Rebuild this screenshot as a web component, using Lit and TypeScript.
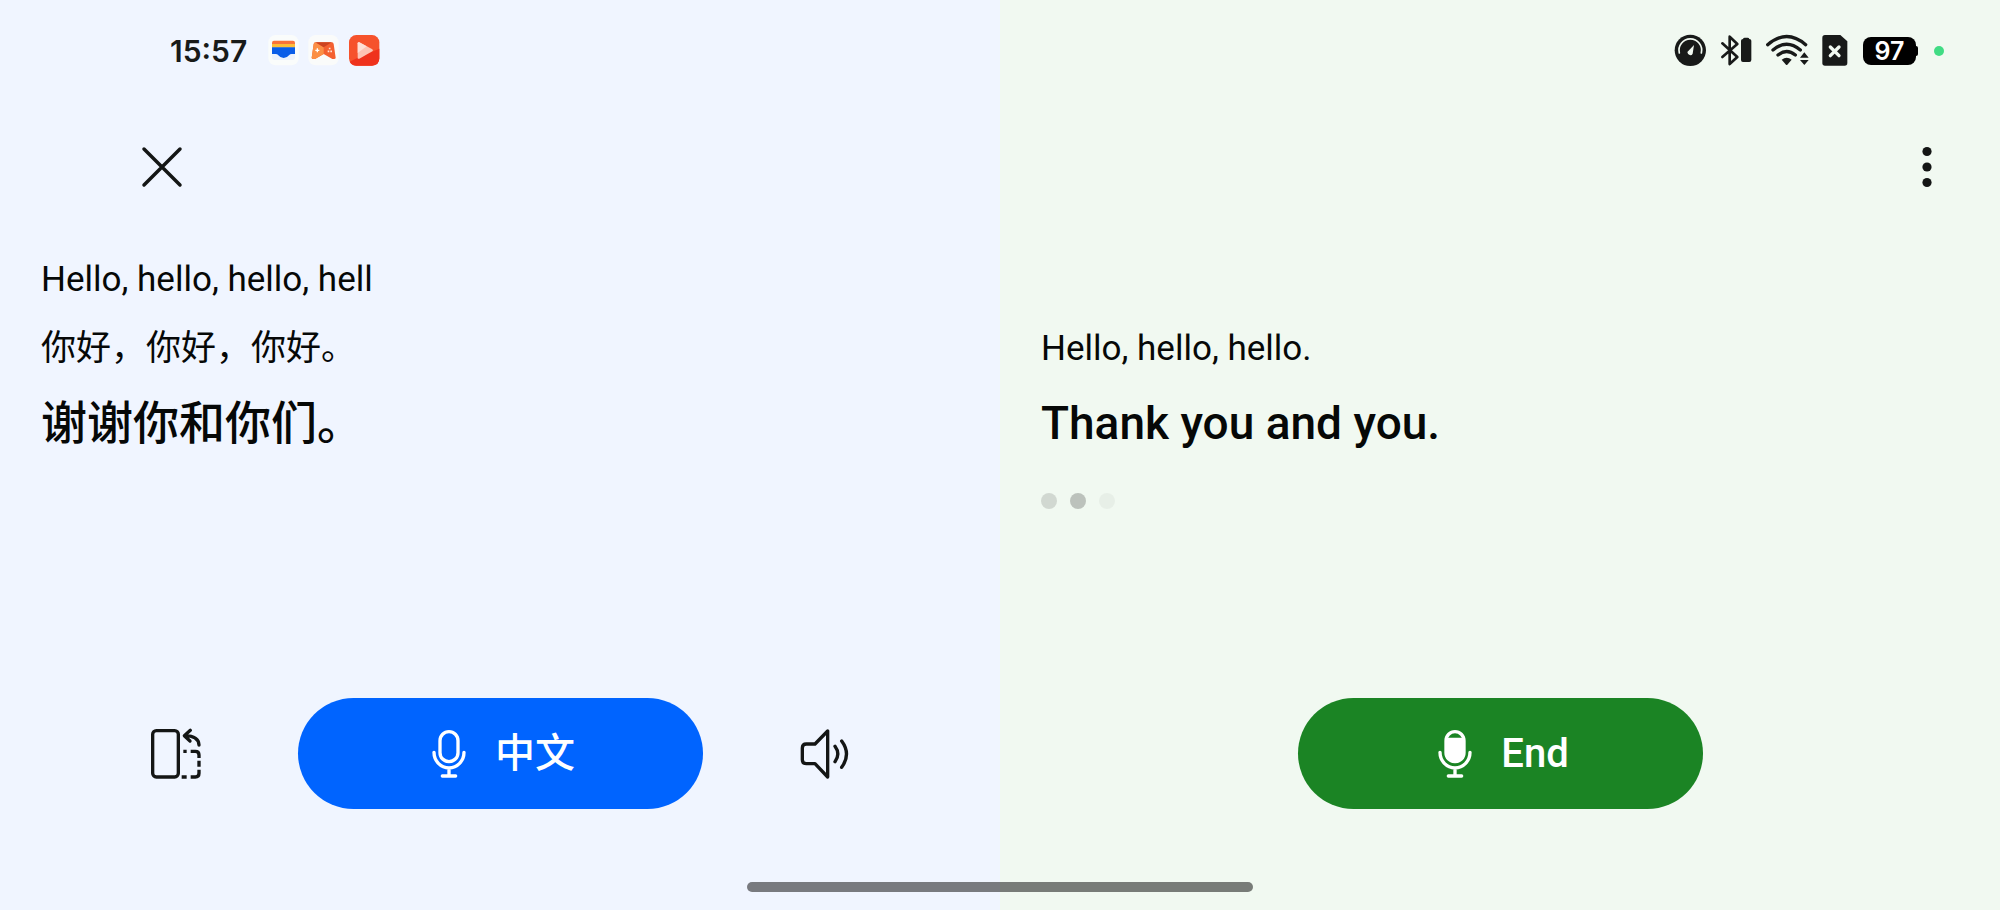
import { LitElement, html, css, svg } from "lit";
import { customElement, property } from "lit/decorators.js";

const walletIcon = svg`<svg class="app-icon" viewBox="0 0 96 102" role="img" aria-label="Wallet">
  <rect x="1" y="3" width="91" height="91" rx="22" fill="#fafcfb"/>
  <path d="M12 58h69v12q0 8-8 8H20q-8 0-8-8z" fill="#edf2fc"/>
  <path d="M12 32v-6q0-6 6-6h57q6 0 6 6v6z" fill="#fb7338"/>
  <rect x="12" y="30" width="69" height="11" fill="#fdbd38"/>
  <path d="M12 40h69v20H71q-5 0-8 4-6 8-16 8t-16-8q-3-4-8-4H12z" fill="#0a5de8"/>
</svg>`;

const gameIcon = svg`<svg class="app-icon" viewBox="0 0 96 102" role="img" aria-label="Games">
  <rect x="1" y="3" width="91" height="91" rx="22" fill="#fafbfa"/>
  <path d="M22 25h50q4 0 5 5l6 41q0 4-5 4h-5L47 60 21 75h-5q-5 0-5-4l6-41q1-5 5-5z" fill="#f4602f"/>
  <path d="M17 30l4-5 26 15v20L21 75h-5q-5 0-5-4z" fill="#fb8f45"/>
  <path d="M23 25h48L47 40z" fill="#cc431f"/>
  <path d="M28 43v12M22 49h12" stroke="#fff" stroke-width="4"/>
  <path d="M65 41v5M59 52h5M67 52h5" stroke="#ffe2d6" stroke-width="5"/>
</svg>`;

const playIcon = svg`<svg class="app-icon" viewBox="0 0 96 102" role="img" aria-label="Video">
  <rect x="3" y="3" width="91" height="92" rx="22" fill="#f6522c"/>
  <path d="M94 44v29q0 22-22 22H25q-14 0-20-12l24-12 20-8z" fill="#ef321d"/>
  <path d="M29 28q0-5 5-3l39 21q4 3 0 6L34 74q-5 2-5-3z" fill="#fdc4b5"/>
  <path d="M29 28q0-5 5-3l22 12-27 20z" fill="#fee0d6"/>
</svg>`;

const gaugeIcon = svg`<svg class="gauge" viewBox="0 0 102 102" role="img" aria-label="Performance">
  <circle cx="49" cy="49" r="47" fill="#181a19"/>
  <path d="M16 57a34 34 0 1 1 66 0" fill="none" stroke="#f1f9f1" stroke-width="5" stroke-linecap="round"/>
  <path d="M60 33l-4 26q-3 6-9 4t-7-9z" fill="#f1f9f1"/>
</svg>`;

const bluetoothIcon = svg`<svg class="bluetooth" viewBox="0 0 96 102" role="img" aria-label="Bluetooth">
  <path d="M7 28L52 69 29 90V8l23 22L7 69" fill="none" stroke="#181a19" stroke-width="8" stroke-linecap="round" stroke-linejoin="round"/>
  <path d="M63 20q0-5 6-5 1-4 5-4h9q4 0 5 4 6 0 6 5v58q0 6-6 6H69q-6 0-6-6z" fill="#181a19"/>
</svg>`;

const wifiIcon = svg`<svg class="wifi" viewBox="0 0 135 102" role="img" aria-label="Wi-Fi">
  <g fill="none" stroke="#181a19" stroke-width="10" stroke-linecap="round">
    <path d="M11 32Q68-17 125 32"/>
    <path d="M27 48Q68 14 109 48"/>
    <path d="M42 63Q68 42 94 63"/>
  </g>
  <path d="M53 77q15-12 30 0L70 92q-2 2-4 0z" fill="#181a19"/>
  <path d="M121 55l13 16h-26zM108 78h26l-13 15z" fill="#181a19"/>
</svg>`;

const simIcon = svg`<svg class="sim" viewBox="0 0 90 102" role="img" aria-label="No SIM">
  <path d="M12 3h46l21 19v65q0 8-8 8H12q-8 0-8-8V11q0-8 8-8z" fill="#181a19"/>
  <path d="M28 39l26 26M54 39L28 65" stroke="#f1f9f1" stroke-width="10" stroke-linecap="round"/>
</svg>`;

const closeIcon = svg`<svg class="glyph" viewBox="0 0 48 48" aria-hidden="true">
  <path d="M6 6l36 36M42 6L6 42" fill="none" stroke="#141615" stroke-width="3.5" stroke-linecap="round"/>
</svg>`;

const moreIcon = svg`<svg class="glyph" viewBox="0 0 48 48" aria-hidden="true">
  <g fill="#141615"><circle cx="24" cy="8.5" r="4.6"/><circle cx="24" cy="24" r="4.6"/><circle cx="24" cy="39.5" r="4.6"/></g>
</svg>`;

const flipIcon = svg`<svg class="tool" viewBox="0 0 168 168" aria-hidden="true">
  <g fill="none" stroke="#141615" stroke-width="10">
    <rect x="14" y="14" width="77" height="139" rx="11"/>
    <path d="M127 13L109 29l17 16M110 29Q152 30 153 57" stroke-linecap="round" stroke-linejoin="round"/>
    <path d="M106 76h10M128 76h14q11 0 11 11v9M153 104v18M153 131v11q0 11-11 11h-14M101 153h15"/>
  </g>
</svg>`;

const speakerIcon = svg`<svg class="tool" viewBox="0 0 168 168" aria-hidden="true">
  <g fill="none" stroke="#141615" stroke-width="10" stroke-linecap="round" stroke-linejoin="round">
    <path d="M57 54L95 15v138L57 113H31q-12 0-12-12V66q0-12 12-12z"/>
    <path d="M117 61q17 23 0 46M137 45q29 39 0 79"/>
  </g>
</svg>`;

const micIcon = (filled: boolean) => svg`<svg class="mic" viewBox="0 0 144 150" aria-hidden="true">
  <g fill="none" stroke="#fff" stroke-width="10" stroke-linecap="round">
    <rect x="45" y="8" width="54" height="90" rx="27"/>
    <path d="M27 70a45 47 0 0 0 90 0M72 117v24M52 141h40"/>
  </g>
  ${filled ? svg`<path d="M46 26h52v46a26 26 0 0 1-52 0z" fill="#fff"/>` : null}
</svg>`;

@customElement("talk-button")
class TalkButton extends LitElement {
  @property() label = "";
  @property({ type: Boolean, reflect: true }) active = false;

  static styles = css`
    :host { display: block; }
    button {
      display: flex;
      align-items: center;
      justify-content: center;
      gap: 22px;
      width: 100%;
      padding: 30px;
      border: 0;
      border-radius: 56px;
      background: #0064ff;
      color: #fff;
      font: 500 40px/51px Roboto, "Noto Sans CJK SC", sans-serif;
      cursor: pointer;
    }
    :host([active]) button { background: #1b8424; }
    .mic { display: block; width: 48px; height: 50px; }
  `;

  render() {
    return html`<button type="button">${micIcon(this.active)}<span>${this.label}</span></button>`;
  }
}

@customElement("app-root")
class AppRoot extends LitElement {
  static styles = css`
    :host {
      display: block;
      position: relative;
      font-family: Roboto, "Noto Sans CJK SC", sans-serif;
      color: #060807;
    }
    * { box-sizing: border-box; }
    main {
      display: grid;
      grid-template-columns: 1fr 1fr;
      min-height: 100vh;
    }
    .pane { display: flex; flex-direction: column; }
    .source { background: #f0f5ff; }
    .target { background: #f1f9f1; }

    .status {
      display: flex;
      align-items: center;
      height: 102px;
      font-family: Inter, sans-serif;
      font-weight: 600;
    }
    .source .status { padding-left: 170px; gap: 21px; }
    .target .status { padding-right: 56px; gap: 12px; justify-content: flex-end; }
    .time { font-size: 30px; line-height: 36px; color: #181a19; }
    .apps { display: flex; gap: 8px; }
    svg { display: block; }
    .app-icon, .bluetooth { width: 32px; height: 34px; }
    .gauge { width: 34px; height: 34px; }
    .wifi { width: 45px; height: 34px; }
    .sim { width: 30px; height: 34px; }
    .battery { display: flex; align-items: center; width: 59px; }
    .charge {
      width: 53px;
      border-radius: 8px;
      background: #000;
      color: #fff;
      font-size: 25px;
      line-height: 28px;
      text-align: center;
    }
    .tip { width: 2px; height: 10px; border-radius: 0 2px 2px 0; background: #000; }
    .recording { width: 10px; height: 10px; border-radius: 50%; background: #41dc84; }

    .toolbar { display: flex; align-items: center; height: 130px; }
    .source .toolbar { padding-left: 138px; }
    .target .toolbar { padding-right: 49px; justify-content: flex-end; }
    .icon-button {
      display: block;
      padding: 0;
      border: 0;
      background: none;
      cursor: pointer;
    }
    .glyph { width: 48px; height: 48px; }
    .tool { width: 56px; height: 56px; }

    .transcript {
      flex: 1;
      display: flex;
      flex-direction: column;
      gap: 24px;
      padding: 25px 41px;
    }
    .target .transcript { padding-top: 94px; }
    p { margin: 0; }
    .past { font-size: 35px; line-height: 45px; }
    .current { font-size: 46px; font-weight: 500; line-height: 57px; }
    .typing { display: flex; gap: 13px; padding-top: 17px; }
    .dot { width: 16px; height: 16px; border-radius: 50%; background: #000; }
    .mid { opacity: 0.13; }
    .strong { opacity: 0.22; }
    .faint { opacity: 0.04; }

    .controls {
      display: grid;
      grid-template-columns: 1fr 405px 1fr;
      align-items: center;
      justify-items: center;
      padding: 0 55px 101px;
    }
    .controls talk-button { grid-column: 2; width: 100%; }

    .home {
      position: absolute;
      left: 50%;
      bottom: 18px;
      width: 506px;
      height: 10px;
      margin-left: -253px;
      border-radius: 5px;
      background: rgba(0, 0, 0, 0.5);
    }
  `;

  render() {
    return html`
      <main>
        <section class="pane source">
          <div class="status">
            <span class="time">15:57</span>
            <div class="apps">${walletIcon}${gameIcon}${playIcon}</div>
          </div>
          <div class="toolbar">
            <button class="icon-button" type="button" aria-label="Close">${closeIcon}</button>
          </div>
          <div class="transcript">
            <p class="past" lang="en">Hello, hello, hello, hell</p>
            <p class="past" lang="zh-CN">你好，你好，你好。</p>
            <p class="current" lang="zh-CN">谢谢你和你们。</p>
          </div>
          <div class="controls">
            <button class="icon-button" type="button" aria-label="Flip view">${flipIcon}</button>
            <talk-button label="中文"></talk-button>
            <button class="icon-button" type="button" aria-label="Play aloud">${speakerIcon}</button>
          </div>
        </section>
        <section class="pane target">
          <div class="status">
            ${gaugeIcon}${bluetoothIcon}${wifiIcon}${simIcon}
            <div class="battery"><span class="charge">97</span><span class="tip"></span></div>
            <span class="recording"></span>
          </div>
          <div class="toolbar">
            <button class="icon-button" type="button" aria-label="More options">${moreIcon}</button>
          </div>
          <div class="transcript" lang="en">
            <p class="past">Hello, hello, hello.</p>
            <p class="current">Thank you and you.</p>
            <div class="typing">
              <span class="dot mid"></span><span class="dot strong"></span><span class="dot faint"></span>
            </div>
          </div>
          <div class="controls">
            <talk-button label="End" active></talk-button>
          </div>
        </section>
      </main>
      <div class="home"></div>
    `;
  }
}
